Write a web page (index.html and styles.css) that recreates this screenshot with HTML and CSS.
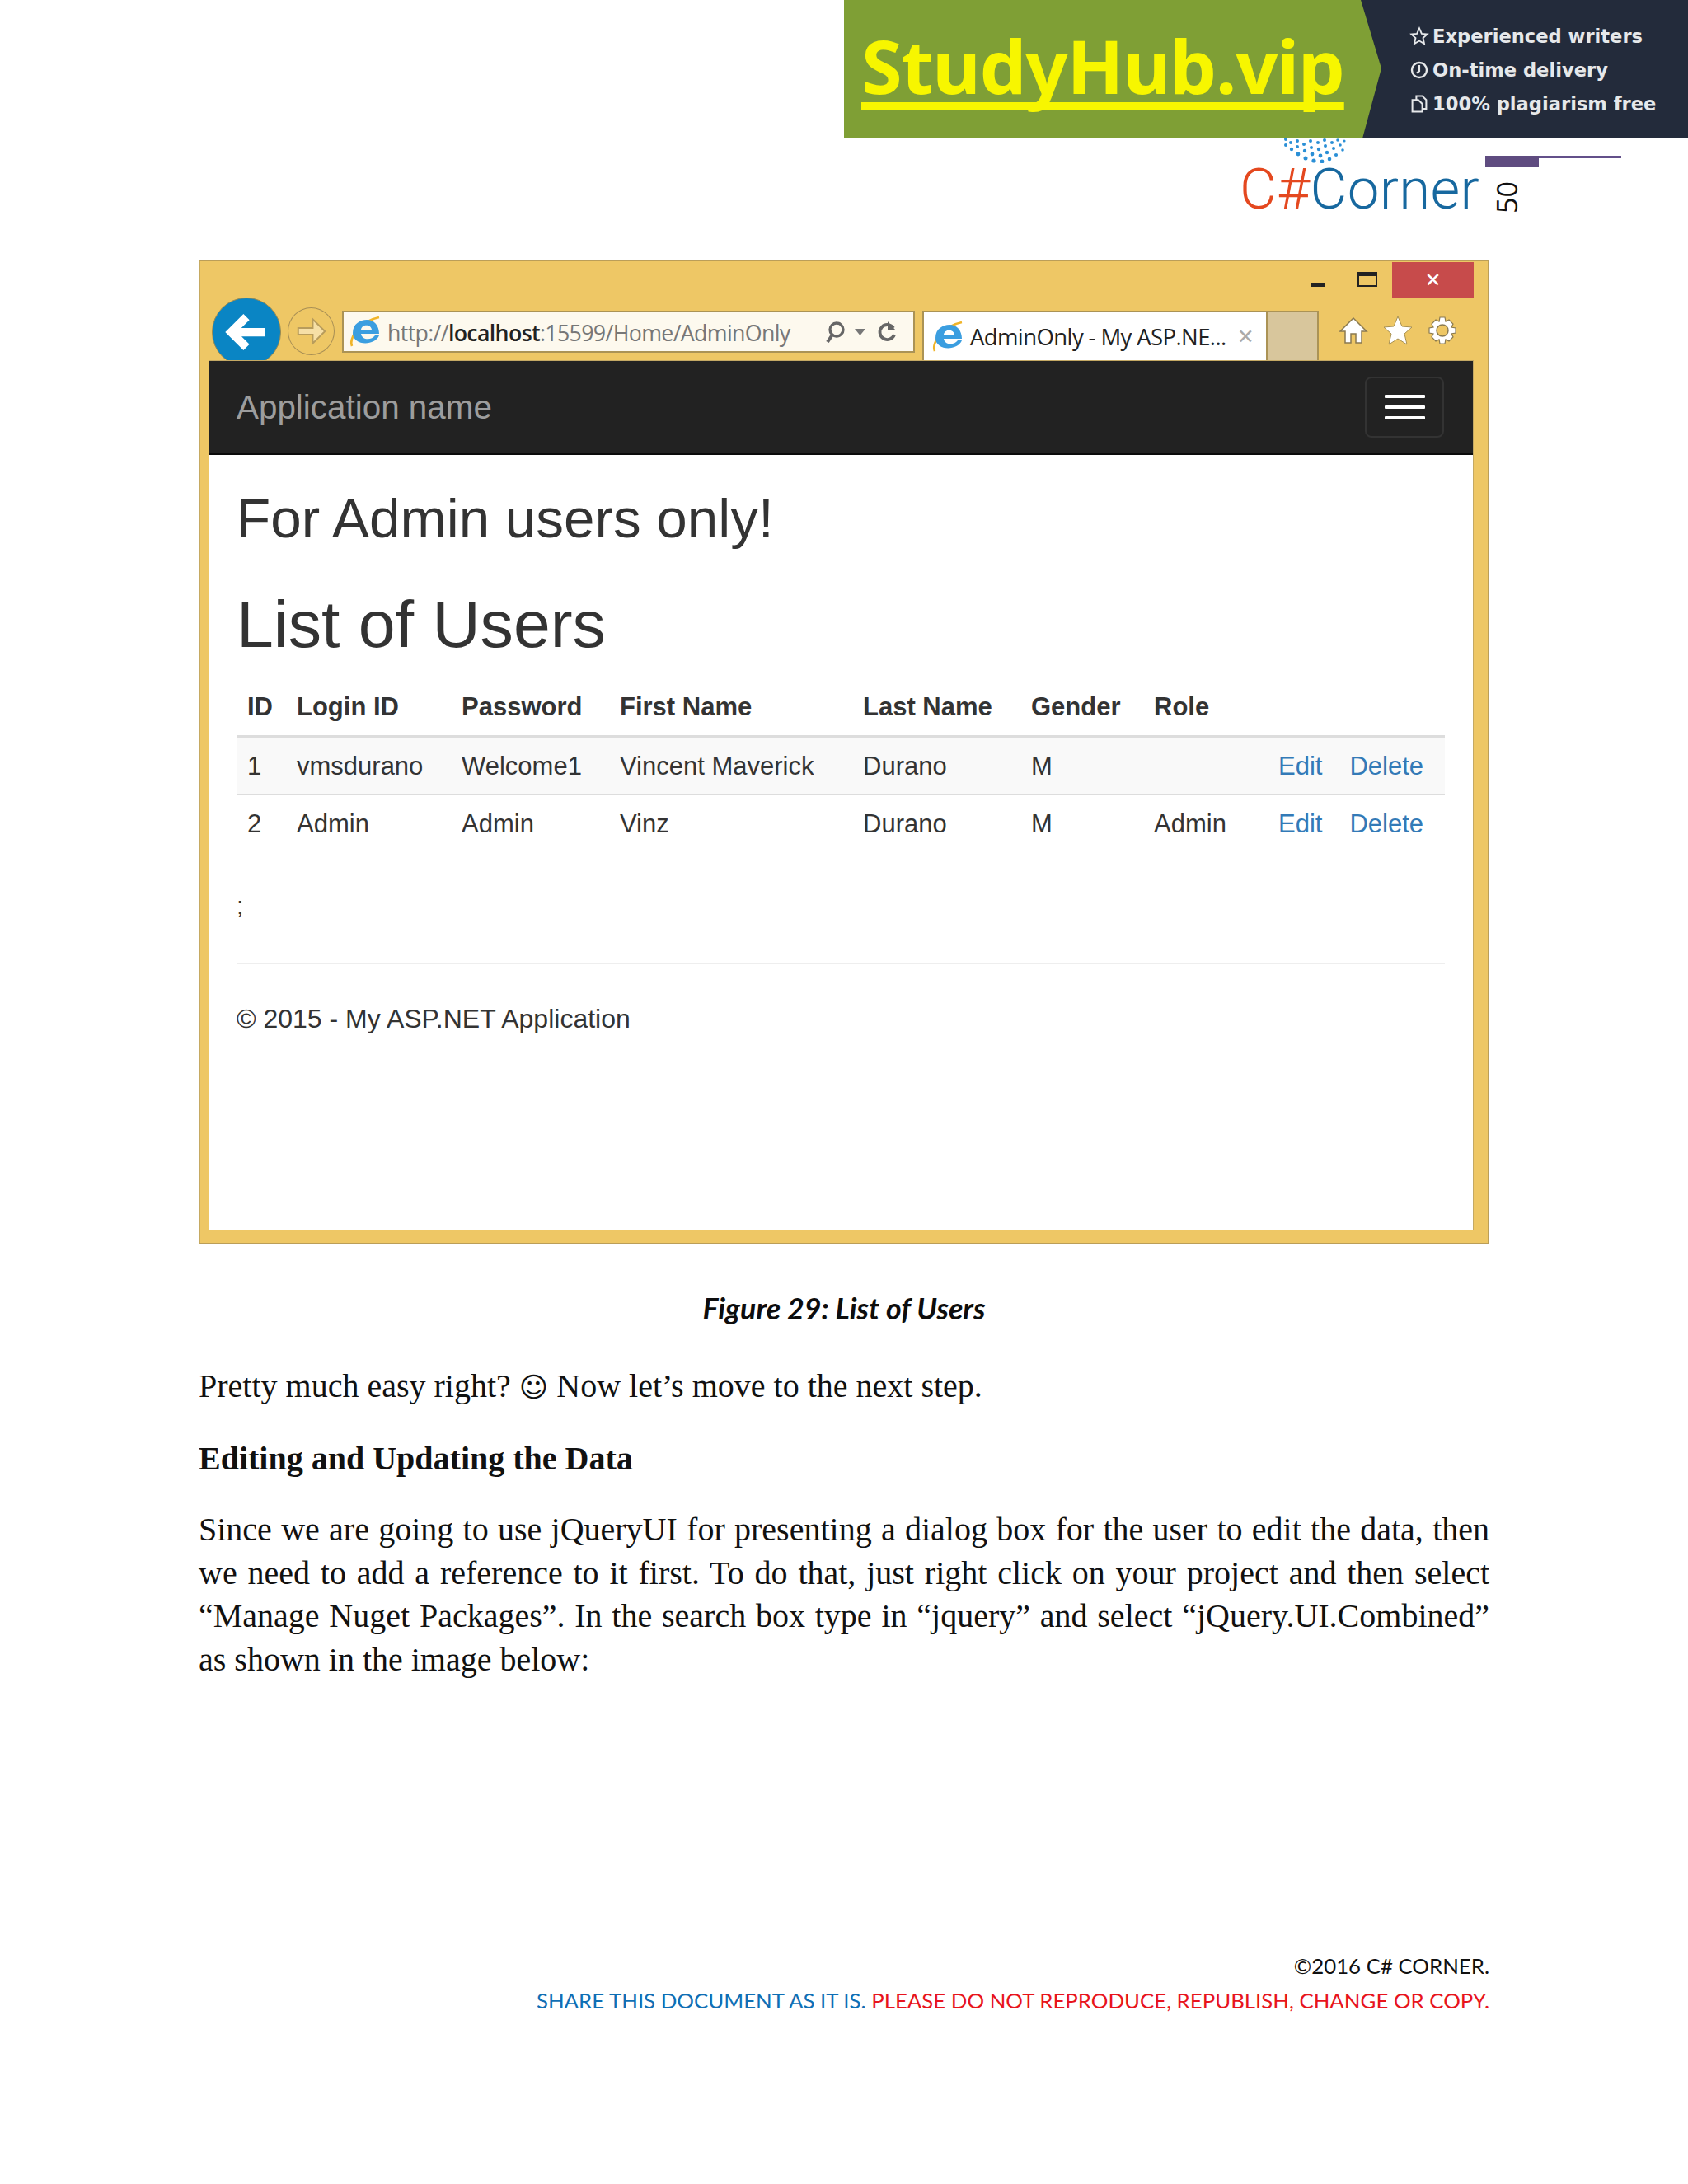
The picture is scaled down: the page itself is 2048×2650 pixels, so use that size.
FILE: index.html
```html
<!DOCTYPE html>
<html lang="en">
<head>
<meta charset="utf-8">
<title>List of Users</title>
<link rel="stylesheet" href="styles.css">
</head>
<body>
<svg class="defs" width="0" height="0" aria-hidden="true">
  <defs>
    <symbol id="ie" viewBox="0 0 40 40">
      <path d="M4 37C0 28 12 7 37 2" fill="none" stroke="#f0b429" stroke-width="2.6"/>
      <path d="M5 21C5 10 14 5 22 5c9 0 15 7 15 17H15c1 8 13 8 17 2h5c-5 13-32 13-32-3zm10-4h13c-1-7-12-7-13 0z" fill="#3b9ee0" fill-rule="evenodd"/>
    </symbol>
  </defs>
</svg>

<aside class="banner">
  <div class="banner-green"><span class="banner-brand">StudyHub.vip</span></div>
  <ul class="banner-list">
    <li><svg class="banner-ico" viewBox="0 0 20 20"><path d="M10 2l2.400 5.400 5.600.6-4.200 3.800 1.200 5.800-5-3-5 3 1.200-5.800L2 8l5.600-.6z" fill="none" stroke="#e6e8ea" stroke-width="1.600"/></svg>Experienced writers</li>
    <li><svg class="banner-ico" viewBox="0 0 20 20"><circle cx="10" cy="10" r="7.500" fill="none" stroke="#e6e8ea" stroke-width="2"/><path d="M10 5v6l-2.500 2" fill="none" stroke="#e6e8ea" stroke-width="1.800"/></svg>On-time delivery</li>
    <li><svg class="banner-ico" viewBox="0 0 20 20"><path d="M7 6V2h6l4 4v9h-4M3 6h6l4 4v8H3z" fill="none" stroke="#e6e8ea" stroke-width="1.700"/></svg>100% plagiarism free</li>
  </ul>
</aside>

<div class="page">
  <header class="doc-head">
    <div class="logo">
      <svg class="logo-dots" viewBox="0 0 78 30">
        <g fill="#2a8fd6">
          <circle cx="3" cy="1" r="2"/><circle cx="3" cy="8" r="2"/><circle cx="9" cy="5" r="2"/><circle cx="10" cy="13" r="2.200"/><circle cx="17" cy="3" r="2"/><circle cx="17" cy="10" r="2"/><circle cx="18" cy="19" r="2.400"/><circle cx="25" cy="7" r="2"/><circle cx="26" cy="15" r="2.200"/><circle cx="27" cy="24" r="2.500"/><circle cx="33" cy="3" r="2"/><circle cx="34" cy="11" r="2"/><circle cx="35" cy="19" r="2.400"/><circle cx="37" cy="27" r="2.600"/><circle cx="42" cy="5" r="2"/><circle cx="43" cy="13" r="2.200"/><circle cx="45" cy="21" r="2.400"/><circle cx="47" cy="28" r="2.400"/><circle cx="50" cy="2" r="2"/><circle cx="51" cy="9" r="2"/><circle cx="53" cy="17" r="2.200"/><circle cx="56" cy="25" r="2.300"/><circle cx="59" cy="5" r="2"/><circle cx="61" cy="12" r="2"/><circle cx="64" cy="20" r="2.100"/><circle cx="66" cy="2" r="1.800"/><circle cx="69" cy="8" r="1.800"/><circle cx="72" cy="14" r="1.800"/><circle cx="74" cy="3" r="1.600"/>
        </g>
      </svg>
      <div class="logo-word"><span class="logo-red">C#</span><span class="logo-blue">Corner</span></div>
    </div>
    <div class="page-mark">
      <div class="mark-bar"><span class="mark-block"></span></div>
      <span class="page-num">50</span>
    </div>
  </header>

  <figure class="browser">
    <div class="titlebar">
      <span class="win-min"></span>
      <span class="win-max"></span>
      <span class="win-close">✕</span>
    </div>
    <div class="toolbar">
      <span class="nav-back"><svg viewBox="0 0 80 80" class="nav-svg"><path d="M62 40H24M40 22L22 40l18 18" fill="none" stroke="#fff" stroke-width="10"/></svg></span>
      <span class="nav-forward"><svg viewBox="0 0 56 56" class="nav-svg"><path d="M12 24h18v-11l15 15-15 15V32H12z" fill="#f6dfa6" stroke="#b89c5c" stroke-width="2"/></svg></span>
      <div class="address">
        <svg class="ie-ico"><use href="#ie"/></svg>
        <span class="url">http://<b>localhost</b>:15599/Home/AdminOnly</span>
        <svg class="addr-tools" viewBox="0 0 92 30">
          <circle cx="16" cy="12" r="8" fill="none" stroke="#666" stroke-width="3.400"/><path d="M11 18L5 27" stroke="#666" stroke-width="4"/>
          <path d="M38 11h13l-6.500 8z" fill="#777"/>
          <path d="M85 10a9 9 0 1 0 1 8" fill="none" stroke="#666" stroke-width="3.800"/><path d="M78 2v10h9z" fill="#666"/>
        </svg>
      </div>
      <div class="tab">
        <svg class="ie-ico"><use href="#ie"/></svg>
        <span class="tab-title">AdminOnly - My ASP.NE...</span>
        <span class="tab-x">✕</span>
      </div>
      <span class="tab-new"></span>
      <div class="tools">
        <svg class="tool" viewBox="0 0 36 36"><path d="M18 3L2 19h6v14h7V22h6v11h7V19h6z" fill="#fff" stroke="#8a7a50" stroke-width="1.500"/></svg>
        <svg class="tool" viewBox="0 0 36 36"><path d="M18 1l5 12 12 1-9 8 3 13-11-7-11 7 3-13-9-8 12-1z" fill="#fff" stroke="#a89050" stroke-width="1"/></svg>
        <svg class="tool" viewBox="0 0 36 36"><path d="M15 2h6l1 5 4-2 5 5-2 4 5 1v6l-5 1 2 4-5 5-4-2-1 5h-6l-1-5-4 2-5-5 2-4-5-1v-6l5-1-2-4 5-5 4 2z" fill="#fff" stroke="#8a7a50" stroke-width="1.200"/><circle cx="18" cy="18" r="7" fill="#eec765" stroke="#8a7a50" stroke-width="1.500"/></svg>
      </div>
    </div>
    <div class="viewport">
      <nav class="navbar">
        <span class="brand">Application name</span>
        <span class="toggle"><i></i><i></i><i></i></span>
      </nav>
      <main class="content">
        <h2 class="title-admin">For Admin users only!</h2>
        <h1 class="title-list">List of Users</h1>
        <table class="users">
          <colgroup>
            <col class="c-id"><col class="c-login"><col class="c-pass"><col class="c-first"><col class="c-last"><col class="c-gender"><col class="c-role"><col class="c-act">
          </colgroup>
          <thead>
            <tr><th>ID</th><th>Login ID</th><th>Password</th><th>First Name</th><th>Last Name</th><th>Gender</th><th>Role</th><th></th></tr>
          </thead>
          <tbody>
            <tr class="odd"><td>1</td><td>vmsdurano</td><td>Welcome1</td><td>Vincent Maverick</td><td>Durano</td><td>M</td><td></td><td><a class="act">Edit</a><a class="act">Delete</a></td></tr>
            <tr><td>2</td><td>Admin</td><td>Admin</td><td>Vinz</td><td>Durano</td><td>M</td><td>Admin</td><td><a class="act">Edit</a><a class="act">Delete</a></td></tr>
          </tbody>
        </table>
        <p class="semi">;</p>
        <hr class="rule">
        <p class="copy">© 2015 - My ASP.NET Application</p>
      </main>
    </div>
  </figure>

  <p class="caption">Figure 29: List of Users</p>
  <p class="body-line intro">Pretty much easy right? <span class="smile">☺</span> Now let’s move to the next step.</p>
  <h3 class="subhead">Editing and Updating the Data</h3>
  <p class="body-par">Since we are going to use jQueryUI for presenting a dialog box for the user to edit the data, then we need to add a reference to it first. To do that, just right click on your project and then select “Manage Nuget Packages”. In the search box type in “jquery” and select “jQuery.UI.Combined” as shown in the image below:</p>

  <footer class="doc-foot">
    <p class="foot-line">©2016 C# CORNER.</p>
    <p class="foot-line"><span class="foot-blue">SHARE THIS DOCUMENT AS IT IS.</span> <span class="foot-red">PLEASE DO NOT REPRODUCE, REPUBLISH, CHANGE OR COPY.</span></p>
  </footer>
</div>
</body>
</html>
```
FILE: styles.css
```css
* { box-sizing: border-box; }
html, body { margin: 0; padding: 0; background: #fff; }
body { width: 2048px; height: 2650px; position: relative; overflow: hidden; font-family: "Liberation Sans", sans-serif; }
.defs { position: absolute; }

/* banner */
.banner { position: absolute; top: 0; right: 0; width: 1024px; height: 168px; background: #232b3b; display: flex; z-index: 2; }
.banner-green { width: 652px; height: 168px; background: #7f9f35; clip-path: polygon(0 0, 627px 0, 652px 83px, 629px 168px, 0 168px); padding: 19px 0 0 21px; flex: none; }
.banner-brand { font-family: "Noto Sans", sans-serif; font-weight: 700; font-size: 90px; line-height: 120px; letter-spacing: -1.2px; color: #f7f600; text-decoration: underline 9px; text-underline-offset: 10px; text-decoration-skip-ink: none; display: inline-block; }
.banner-list { list-style: none; margin: 0; padding: 31px 0 0 34px; display: flex; flex-direction: column; gap: 15px; }
.banner-list li { display: flex; align-items: center; font-family: "DejaVu Sans", sans-serif; font-weight: 700; font-size: 22.6px; line-height: 26px; color: #e6e8ea; white-space: nowrap; }
.banner-ico { width: 24px; height: 24px; margin-right: 4px; flex: none; }

/* document head */
.page { padding: 0 241px; width: 2048px; }
.doc-head { height: 315px; display: flex; justify-content: flex-end; padding: 168px 0 0; margin-right: -160px; }
.logo { width: 288px; display: flex; flex-direction: column; margin-right: 10px; }
.logo-dots { width: 78px; height: 30px; margin-left: 53px; display: block; }
.logo-word { font-family: "Roboto", sans-serif; font-weight: 300; font-size: 69px; line-height: 64px; margin-top: 0; white-space: nowrap; letter-spacing: .3px; }
.logo-red { color: #e4481f; }
.logo-blue { color: #17689f; }
.page-mark { width: 165px; padding-top: 21px; position: relative; }
.mark-bar { height: 3px; background: #63508a; }
.mark-block { display: block; width: 65px; height: 14px; background: #5f4c80; }
.page-num { display: block; font-family: "Open Sans", sans-serif; font-size: 34px; line-height: 30px; transform: rotate(-90deg); width: 40px; margin: 32px 0 0 6px; color: #111; }

/* browser */
.browser { margin: 0; width: 1566px; height: 1195px; background: #eec765; border: 2px solid #bb9e58; border-left-color: #c6aa62; display: flex; flex-direction: column; }
.titlebar { height: 45px; display: flex; align-items: flex-start; flex: none; padding-right: 17px; justify-content: flex-end; }
.win-min { width: 18px; height: 5px; background: #222; margin: 26px 39px 0 0; }
.win-max { width: 24px; height: 18px; border: 2px solid #222; border-top-width: 5px; margin: 13px 18px 0 0; }
.win-close { width: 99px; height: 44px; margin-top: 1px; background: #c74b4b; color: #fff; font-size: 24px; font-weight: 700; line-height: 44px; text-align: center; font-family: "DejaVu Sans", sans-serif; }
.toolbar { height: 76px; display: flex; flex: none; overflow: hidden; padding-left: 14px; }
.nav-back { width: 84px; height: 84px; margin-top: -1px; border-radius: 50%; background: #0a85c4; border: 1px solid #9a8a50; flex: none; }
.nav-svg { display: block; width: 100%; height: 100%; }
.nav-forward { width: 57px; height: 58px; border-radius: 50%; border: 1.5px solid #a88f55; margin: 11px 0 0 8px; flex: none; }
.address { width: 695px; height: 51px; margin: 15px 0 0 9px; background: #fdf9ee; border: 2px solid #ab9355; display: flex; align-items: center; padding-left: 6px; flex: none; }
.ie-ico { width: 40px; height: 40px; flex: none; }
.url { font-family: "Open Sans", sans-serif; font-size: 26.8px; color: #777; margin-left: 7px; white-space: nowrap; letter-spacing: -.68px; width: 534px; padding-top: 2px; }
.url b { font-weight: 600; color: #222; }
.addr-tools { width: 92px; height: 30px; flex: none; margin-left: -5px; }
.tab { width: 417px; height: 61px; margin: 15px 0 0 9px; background: #fff; border: 2px solid #ab9355; border-bottom: 0; border-right: 0; display: flex; align-items: center; padding: 0 0 0 9px; flex: none; }
.tab-title { font-family: "Open Sans", sans-serif; font-size: 27.5px; color: #222; margin-left: 7px; white-space: nowrap; letter-spacing: -.6px; }
.tab-x { color: #aaa; font-family: "DejaVu Sans", sans-serif; font-weight: 700; font-size: 25px; margin-left: 13px; }
.tab-new { width: 64px; height: 61px; margin-top: 15px; background: #d8c69c; border: 2px solid #ab9355; border-bottom: 0; flex: none; }
.tools { display: flex; gap: 18px; padding: 21px 0 0 24px; }
.tool { width: 36px; height: 36px; display: block; }
.viewport { flex: 1; margin: 0 18px 16px 11px; background: #fff; box-shadow: 0 0 0 1px #c4a964; display: flex; flex-direction: column; }
.navbar { height: 114px; background: #222; border-bottom: 2px solid #0b0b0b; padding: 0 35px 0 33px; display: flex; align-items: center; justify-content: space-between; flex: none; }
.brand { font-size: 40.4px; color: #9d9d9d; }
.toggle { width: 96px; height: 74px; border: 2px solid #333; border-radius: 8px; display: flex; flex-direction: column; justify-content: center; align-items: center; gap: 9px; }
.toggle i { display: block; width: 49px; height: 4px; background: #fff; border-radius: 1px; }
.content { padding: 0 34px 0 33px; color: #333; }
.title-admin { font-size: 67.4px; font-weight: 400; line-height: 78px; margin: 38px 0 0; }
.title-list { font-size: 80.6px; font-weight: 400; line-height: 92px; margin: 43px 0 0; }
.users { width: 1466px; table-layout: fixed; border-collapse: collapse; margin-top: 20px; font-size: 31px; }
.c-id { width: 60px; } .c-login { width: 200px; } .c-pass { width: 192px; } .c-first { width: 295px; } .c-last { width: 204px; } .c-gender { width: 149px; } .c-role { width: 151px; } .c-act { width: 215px; }
.users th { text-align: left; font-weight: 700; height: 71px; padding: 0 0 0 13px; border-bottom: 4px solid #ddd; }
.users td { height: 70px; padding: 0 0 0 13px; white-space: nowrap; border-top: 2px solid #ddd; }
.users thead + tbody tr:first-child td { border-top: 0; }
.users .odd { background: #f9f9f9; }
.act { color: #337ab7; margin-right: 33px; }
.semi { font-size: 30px; line-height: 40px; margin: 45px 0 0; }
.rule { border: 0; border-top: 2px solid #eee; margin: 49px 0 0; }
.copy { font-size: 32px; line-height: 44px; margin: 44px 0 0; }

/* body text */
.caption { font-family: "Lato", sans-serif; font-weight: 700; font-style: italic; font-size: 35.8px; line-height: 40px; text-align: center; margin: 58px 0 0; color: #0d0d0d; }
.body-line, .body-par { font-family: "Liberation Serif", serif; font-size: 40px; line-height: 52.8px; color: #111; margin: 0; }
.intro { margin-top: 48px; }
.smile { font-family: "DejaVu Sans", sans-serif; font-size: 34px; line-height: 1; }
.subhead { font-family: "Liberation Serif", serif; font-size: 40px; line-height: 52px; font-weight: 700; margin: 35px 0 0; color: #111; }
.body-par { text-align: justify; margin-top: 34px; }

/* foot */
.doc-foot { margin-top: 323px; text-align: right; font-family: "Lato", sans-serif; font-size: 25.8px; line-height: 42px; color: #111; }
.foot-line { margin: 0; }
.foot-blue { color: #0f6fb5; }
.foot-red { color: #e8141c; }
```
